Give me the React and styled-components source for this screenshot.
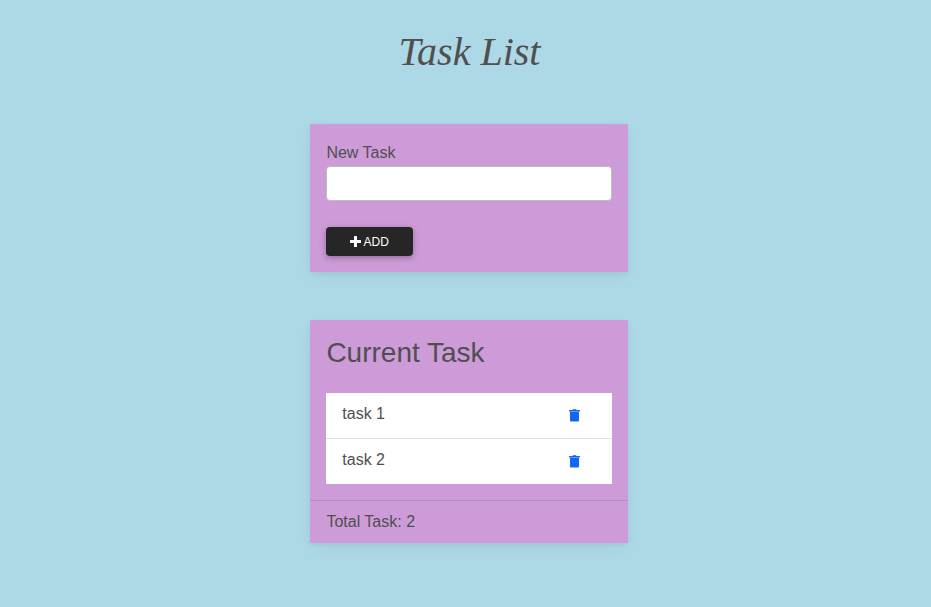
import React from "react";
import styled, { createGlobalStyle } from "styled-components";

const Global = createGlobalStyle`
  *, *::before, *::after { box-sizing: border-box; }
  body {
    margin: 0;
    min-height: 100vh;
    background: #add8e6;
    color: #4f4f4f;
    font: 400 16px/1.6 "Liberation Sans", Arial, sans-serif;
  }
`;

const Page = styled.main`
  display: flex;
  flex-direction: column;
  align-items: center;
  padding: 28px 0 0 7px;
`;

const Title = styled.h1`
  margin: 0 0 48px;
  padding-left: 1px;
  font: italic 400 40px/48px "Liberation Serif", "Times New Roman", serif;
`;

const Card = styled.section`
  width: 318px;
  margin-bottom: 48px;
  background: #ce9bd9;
  box-shadow: 0 2px 6px -1px rgba(0, 0, 0, 0.07), 0 6px 18px -1px rgba(0, 0, 0, 0.04);
`;

const TaskForm = styled.form`
  display: flex;
  flex-direction: column;
  align-items: flex-start;
  padding: 16px;
`;

const Label = styled.label`
  padding-left: 0.4px;
  line-height: 26px;
`;

const Input = styled.input`
  width: 100%;
  height: 35px;
  margin: 0 0 26px;
  padding: 5px 12px;
  border: 1px solid #bdbdbd;
  border-radius: 4px;
  background: #fff;
  font: inherit;
`;

const AddButton = styled.button`
  display: flex;
  align-items: center;
  justify-content: center;
  gap: 2.5px;
  width: 87px;
  height: 29px;
  padding: 0;
  border: 0;
  border-radius: 4px;
  background: #262626;
  color: #fff;
  box-shadow: 0 2px 5px 0 rgba(0, 0, 0, 0.2), 0 2px 10px 0 rgba(0, 0, 0, 0.1);
  font: 400 12px/18px "Liberation Sans", Arial, sans-serif;
`;

const CardBody = styled.div`
  padding: 16px;
`;

const CardTitle = styled.h2`
  margin: 0 0 24px;
  padding-left: 0.4px;
  font-size: 28px;
  font-weight: 400;
  line-height: 33px;
`;

const List = styled.ul`
  margin: 0;
  padding: 0;
  list-style: none;
  background: #fff;
`;

const Item = styled.li`
  display: flex;
  justify-content: space-between;
  align-items: flex-start;
  height: 45px;
  padding: 8px 32px 0 16.3px;

  & + & {
    height: 46px;
    border-top: 1px solid #e0e0e0;
  }
`;

const DeleteButton = styled.button`
  display: flex;
  margin-top: 8px;
  padding: 0;
  border: 0;
  background: none;
  color: #1266f1;
`;

const CardFooter = styled.footer`
  height: 43px;
  padding: 8px 16px 8px 16.4px;
  border-top: 1px solid #b98bc3;
`;

const PlusIcon = () => (
  <svg width="11" height="11" viewBox="0 0 11 11" fill="currentColor" aria-hidden="true">
    <path d="M4 .6Q4 0 4.600 0h1.800Q7 0 7 .6V4h3.400q.6 0 .6.6v1.800q0 .6-.6.6H7v3.400q0 .6-.6.6H4.600q-.6 0-.6-.6V7H.6Q0 7 0 6.400V4.600Q0 4 .6 4H4z" />
  </svg>
);

const TrashIcon = () => (
  <svg width="11" height="13" viewBox="0 0 11 13" fill="currentColor" aria-hidden="true">
    <path d="M.5 1h3L4 .3h3L7.500 1h3q.5 0 .5.5V2.600H0V1.500Q0 1 .5 1z" />
    <path d="M1 3h9v8.500q0 1-1 1H2q-1 0-1-1z" />
    <path d="M1 2.500h9v.6H1z" opacity=".65" />
  </svg>
);

const tasks = ["task 1", "task 2"];

export default function App() {
  return (
    <>
      <Global />
      <Page>
        <Title>Task List</Title>
        <Card>
          <TaskForm>
            <Label htmlFor="new-task">New Task</Label>
            <Input id="new-task" />
            <AddButton type="button"><PlusIcon />ADD</AddButton>
          </TaskForm>
        </Card>
        <Card>
          <CardBody>
            <CardTitle>Current Task</CardTitle>
            <List>
              {tasks.map((task) => (
                <Item key={task}>
                  {task}
                  <DeleteButton aria-label={`Delete ${task}`}><TrashIcon /></DeleteButton>
                </Item>
              ))}
            </List>
          </CardBody>
          <CardFooter>Total Task: {tasks.length}</CardFooter>
        </Card>
      </Page>
    </>
  );
}
